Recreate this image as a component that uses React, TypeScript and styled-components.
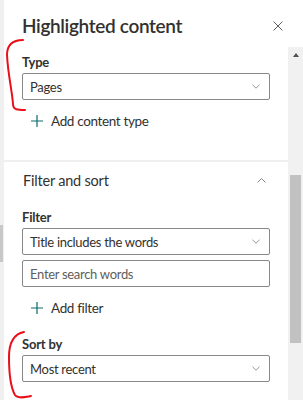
import React from "react";
import styled, { createGlobalStyle } from "styled-components";

const GlobalStyle = createGlobalStyle`
  html, body { margin: 0; padding: 0; background: #fff; }
  body { font-family: "Lato", "Open Sans", sans-serif; color: #323130; }
  * { box-sizing: border-box; }
`;

const Screen = styled.div`
  position: relative;
  width: 303px;
  height: 400px;
  display: flex;
  overflow: hidden;
  background: #fff;
`;

const PageEdge = styled.div`
  width: 4px;
  flex: none;
  background: #f0f0f0;
  display: flex;
  flex-direction: column;
`;

const EdgeThumb = styled.div`
  margin-top: 225px;
  height: 37px;
  width: 3px;
  background: #c8c8c8;
`;

const Panel = styled.div`
  flex: 1;
  min-width: 0;
  display: flex;
  flex-direction: column;
`;

const Header = styled.div`
  height: 47px;
  flex: none;
  display: flex;
  align-items: flex-start;
  justify-content: space-between;
  padding: 13px 20px 0 18px;
`;

const Title = styled.h1`
  margin: 0;
  font-size: 19px;
  line-height: 26px;
  font-weight: 600;
  letter-spacing: -0.35px;
  color: #323130;
`;

const CloseButton = styled.button`
  border: none;
  background: none;
  padding: 0;
  margin-top: 8px;
  width: 10px;
  height: 10px;
  display: flex;
`;

const Body = styled.div`
  flex: 1;
  min-height: 0;
  display: flex;
`;

const Content = styled.div`
  flex: 1;
  min-width: 0;
  overflow: hidden;
  display: flex;
  flex-direction: column;
`;

const Track = styled.div`
  width: 15px;
  flex: none;
  background: #f1f1f1;
  display: flex;
  flex-direction: column;
  align-items: center;
`;

const ArrowUp = styled.div`
  margin-top: 6px;
  width: 0;
  height: 0;
  border-left: 3.5px solid transparent;
  border-right: 3.5px solid transparent;
  border-bottom: 4px solid #505050;
`;

const Thumb = styled.div`
  margin-top: 118px;
  width: 11px;
  height: 168px;
  background: #c1c1c1;
`;

const Section = styled.section<{ $top: number; $bottom: number }>`
  padding: ${(p) => p.$top}px 18px ${(p) => p.$bottom}px;
  display: flex;
  flex-direction: column;
`;

const Divider = styled.div`
  height: 2px;
  background: #f0f0f0;
  flex: none;
`;

const SectionHeader = styled.div`
  height: 39px;
  display: flex;
  align-items: center;
  justify-content: space-between;
  padding: 0 4px 3px 1px;
`;

const SectionTitle = styled.h2`
  margin: 0;
  font-size: 14.5px;
  font-weight: 400;
  letter-spacing: -0.2px;
  color: #323130;
`;

const Label = styled.label<{ $gap?: number }>`
  display: block;
  margin-top: ${(p) => p.$gap ?? 0}px;
  margin-bottom: 2px;
  font-size: 13px;
  line-height: 18px;
  font-weight: 700;
  letter-spacing: -0.2px;
  color: #323130;
`;

const Field = styled.div<{ $gap?: number }>`
  height: 27px;
  margin-top: ${(p) => p.$gap ?? 0}px;
  border: 1px solid #8a8886;
  border-radius: 2px;
  padding: 0 9px 0 7px;
  display: flex;
  align-items: center;
  justify-content: space-between;
  font-size: 13px;
  letter-spacing: -0.3px;
  color: #323130;
`;

const Placeholder = styled.span`
  color: #605e5c;
`;

const AddRow = styled.div`
  height: 32px;
  margin-top: 5px;
  display: flex;
  align-items: center;
  gap: 8px;
  padding-left: 9px;
  font-size: 13.5px;
  letter-spacing: -0.35px;
  color: #323130;
`;

const Annotations = styled.svg`
  position: absolute;
  left: 0;
  top: 0;
  pointer-events: none;
`;

const Chevron = ({ up }: { up?: boolean }) =>
  up ? (
    <svg width="9" height="5" viewBox="0 0 9 5">
      <path d="M0.5 4.5 L4.5 0.5 L8.5 4.5" fill="none" stroke="#8a8886" strokeWidth="1" />
    </svg>
  ) : (
    <svg width="8" height="5" viewBox="0 0 8 5">
      <path d="M0.5 0.8 L4 4.2 L7.5 0.8" fill="none" stroke="#979593" strokeWidth="1" />
    </svg>
  );

const Plus = () => (
  <svg width="12" height="12" viewBox="0 0 12 12">
    <path d="M6 0 V12 M0 6 H12" stroke="#0b6a6a" strokeWidth="1.2" />
  </svg>
);

const Dropdown = ({ value, gap }: { value: string; gap?: number }) => (
  <Field $gap={gap}>
    <span>{value}</span>
    <Chevron />
  </Field>
);

export default function App() {
  return (
    <>
      <GlobalStyle />
      <Screen>
        <PageEdge>
          <EdgeThumb />
        </PageEdge>
        <Panel>
          <Header>
            <Title>Highlighted content</Title>
            <CloseButton aria-label="Close">
              <svg width="10" height="10" viewBox="0 0 10 10">
                <path d="M0.5 0.5 L9.5 9.5 M9.5 0.5 L0.5 9.5" stroke="#605e5c" strokeWidth="1" />
              </svg>
            </CloseButton>
          </Header>
          <Body>
            <Content>
              <Section $top={6} $bottom={23}>
                <Label>Type</Label>
                <Dropdown value="Pages" />
                <AddRow>
                  <Plus />
                  <span>Add content type</span>
                </AddRow>
              </Section>
              <Divider />
              <Section $top={0} $bottom={0}>
                <SectionHeader>
                  <SectionTitle>Filter and sort</SectionTitle>
                  <Chevron up />
                </SectionHeader>
                <Label $gap={7}>Filter</Label>
                <Dropdown value="Title includes the words" />
                <Field $gap={5}>
                  <Placeholder>Enter search words</Placeholder>
                </Field>
                <AddRow>
                  <Plus />
                  <span>Add filter</span>
                </AddRow>
                <Label $gap={11}>Sort by</Label>
                <Dropdown value="Most recent" />
              </Section>
            </Content>
            <Track>
              <ArrowUp />
              <Thumb />
            </Track>
          </Body>
        </Panel>
        <Annotations width="303" height="400" viewBox="0 0 303 400">
          <path
            d="M23 40 C13 40 7 44 7 55 C8 75 12 90 13 104 C13 110 18 110 25 110"
            fill="none"
            stroke="#e8101a"
            strokeWidth="2"
            strokeLinecap="round"
          />
          <path
            d="M24 332 C14 334 9 342 9 357 C9 375 11 388 15 395 C18 399 25 397 31 396"
            fill="none"
            stroke="#e8101a"
            strokeWidth="2"
            strokeLinecap="round"
          />
        </Annotations>
      </Screen>
    </>
  );
}
